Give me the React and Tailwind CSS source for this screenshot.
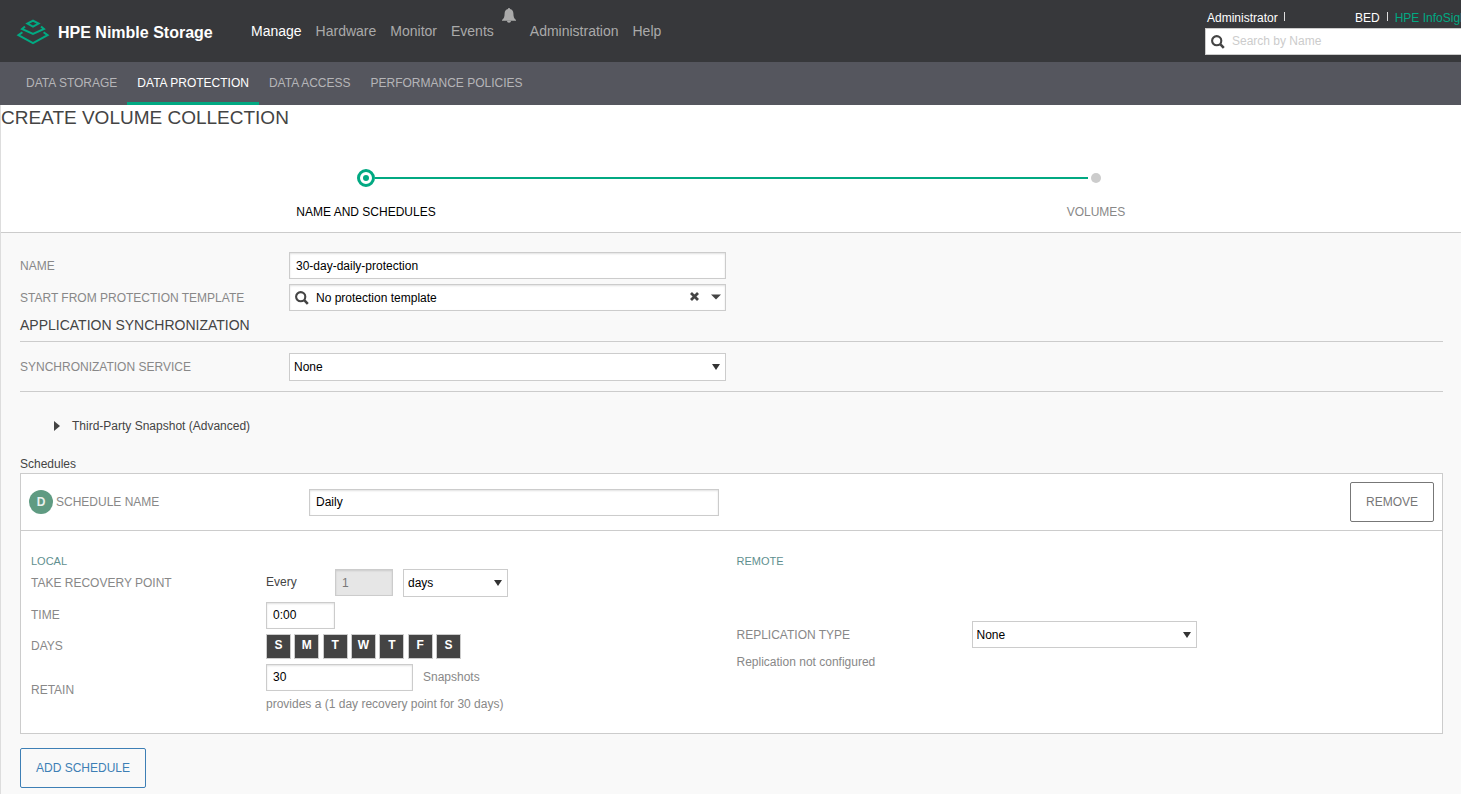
import React, { useState } from "react";

const NAV = ["Manage", "Hardware", "Monitor", "Events"];
const NAV_RIGHT = ["Administration", "Help"];
const TABS = ["DATA STORAGE", "DATA PROTECTION", "DATA ACCESS", "PERFORMANCE POLICIES"];
const DAYS = [
  ["Sunday", "S"],
  ["Monday", "M"],
  ["Tuesday", "T"],
  ["Wednesday", "W"],
  ["Thursday", "T"],
  ["Friday", "F"],
  ["Saturday", "S"],
];

function Logo() {
  return (
    <svg width="34" height="27" viewBox="0 0 34 27" fill="none" stroke="#01a982" strokeWidth="2">
      <path d="M17 2.6 L22.6 5.6 L17 8.6 L11.4 5.6 Z" />
      <path d="M9 8.4 L6 11 L17 16 L28 11 L25 8.4" />
      <path d="M6.4 14.2 L2.4 17.2 L17 25.2 L31.6 17.2 L27.6 14.2" />
    </svg>
  );
}

function BellIcon() {
  return (
    <svg width="14" height="15" viewBox="0 0 14 15" fill="currentColor">
      <path d="M7 0 C7.7 0 8 .5 8 1 C10.2 1.4 11.3 3.2 11.4 5.4 C11.5 8.6 12 10.4 14 12 V12.8 H0 V12 C2 10.4 2.5 8.6 2.6 5.4 C2.7 3.2 3.8 1.4 6 1 C6 .5 6.3 0 7 0 Z" />
      <path d="M5 12.8 H9 C9 14 8.2 14.8 7 14.8 C5.8 14.8 5 14 5 12.8 Z" />
    </svg>
  );
}

function SearchIcon({ className }) {
  return (
    <svg width="14" height="14" viewBox="0 0 14 14" fill="none" stroke="#444" className={className}>
      <circle cx="5.7" cy="5.7" r="4.6" strokeWidth="2.1" />
      <path d="M9.2 9.2 L12.8 12.8" strokeWidth="2.6" />
    </svg>
  );
}

function TextInput({ className = "", ...props }) {
  return (
    <input
      type="text"
      className={`h-[27px] px-[6px] bg-white border border-[#ccc] shadow-[inset_0_1px_2px_rgba(0,0,0,0.12)] text-black disabled:bg-[#e6e6e6] disabled:text-[#777] ${className}`}
      {...props}
    />
  );
}

function Select({ id, options, label, className = "" }) {
  return (
    <div className={`relative ${className}`}>
      <select
        id={id}
        aria-label={label}
        className="w-full h-full pl-1 pr-6 appearance-none bg-white border border-[#ccc] text-black"
      >
        {options.map((o) => (
          <option key={o}>{o}</option>
        ))}
      </select>
      <svg
        width="8"
        height="6"
        viewBox="0 0 8 6"
        className="absolute right-[6px] top-1/2 -translate-y-1/2 pointer-events-none"
      >
        <path d="M0 0 H8 L4 6 Z" fill="#333" />
      </svg>
    </div>
  );
}

function Header() {
  return (
    <header className="flex h-[62px] bg-[#37383b] overflow-hidden">
      <div className="flex items-center w-[251px] shrink-0 pl-4 gap-2">
        <Logo />
        <span className="pt-[3px] text-base font-bold text-white whitespace-nowrap">HPE Nimble Storage</span>
      </div>
      <nav className="flex flex-1 items-center gap-[14px] text-sm text-[#aaa]">
        {NAV.map((item) => (
          <a key={item} href="#" className={item === "Manage" ? "text-white" : ""}>
            {item}
          </a>
        ))}
        <button type="button" aria-label="Alerts" className="self-start mt-2 -ml-[6px]">
          <BellIcon />
        </button>
        {NAV_RIGHT.map((item) => (
          <a key={item} href="#">
            {item}
          </a>
        ))}
      </nav>
      <div className="w-64 shrink-0 pt-[10px] overflow-hidden">
        <div className="flex items-center h-[15px] pl-[2px] text-white whitespace-nowrap">
          <a href="#" className="w-[77px] shrink-0">Administrator</a>
          <span className="w-px h-[9px] mb-[2px] shrink-0 bg-[#ddd]" />
          <a href="#" className="ml-[70px] mr-[7px]">BED</a>
          <span className="w-px h-[9px] mb-[2px] shrink-0 bg-[#ddd]" />
          <a href="#" className="ml-[7px] text-[#01a982]">HPE InfoSight</a>
        </div>
        <div className="relative mt-[3px] w-[280px]">
          <input
            type="search"
            aria-label="Search by Name"
            placeholder="Search by Name"
            className="w-full h-[27px] pl-[26px] pb-[2px] bg-white border border-[#ccc] text-black placeholder:text-[#ccc]"
          />
          <SearchIcon className="absolute left-[6px] top-[7px]" />
        </div>
      </div>
    </header>
  );
}

function SubNav() {
  return (
    <nav className="flex h-[43px] pl-4 bg-[#55565e] text-[#b5b5b8]">
      {TABS.map((tab) => (
        <a
          key={tab}
          href="#"
          className={`flex items-center px-[10px] pt-[2px] border-b-3 ${
            tab === "DATA PROTECTION" ? "border-[#01a982] text-white" : "border-transparent"
          }`}
        >
          {tab}
        </a>
      ))}
    </nav>
  );
}

function Stepper() {
  return (
    <ol className="flex pt-[39px] pb-3">
      <li className="flex-1">
        <div className="flex items-center h-[18px]">
          <span className="flex-1" />
          <span className="flex items-center justify-center size-[18px] rounded-full border-3 border-[#01a982]">
            <span className="size-[6px] rounded-full bg-[#01a982]" />
          </span>
          <span className="flex-1 h-[2px] bg-[#01a982]" />
        </div>
        <p className="mt-[17px] text-center leading-4 text-black">NAME AND SCHEDULES</p>
      </li>
      <li className="flex-1">
        <div className="flex items-center h-[18px]">
          <span className="flex-1 h-[2px] mr-[3px] bg-[#01a982]" />
          <span className="size-[10px] rounded-full bg-[#ccc]" />
          <span className="flex-1 ml-[3px]" />
        </div>
        <p className="mt-[17px] text-center leading-4 text-[#888]">VOLUMES</p>
      </li>
    </ol>
  );
}

function Field({ label, htmlFor, children }) {
  return (
    <div className="flex items-center">
      <label htmlFor={htmlFor} className="w-[269px] shrink-0">{label}</label>
      {children}
    </div>
  );
}

function ScheduleCard() {
  const [days, setDays] = useState(DAYS.map(() => true));
  const toggle = (i) => setDays(days.map((on, j) => (i === j ? !on : on)));

  return (
    <section className="bg-white border border-[#ccc]">
      <div className="flex items-center h-[57px] px-2 border-b border-[#ccc]">
        <span className="flex items-center justify-center size-6 rounded-full bg-[#5f9b82] font-bold text-[#e8f1ed]">
          D
        </span>
        <label htmlFor="schedule-name" className="w-64 pl-[3px]">SCHEDULE NAME</label>
        <TextInput id="schedule-name" defaultValue="Daily" className="w-[410px]" />
        <button
          type="button"
          className="ml-auto h-10 px-[15px] border border-[#777] rounded-xs text-[#777]"
        >
          REMOVE
        </button>
      </div>

      <div className="grid grid-cols-2 gap-[10px] px-[10px] pt-[23px] pb-[21px]">
        <div>
          <h3 className="text-[11px] leading-[15px] text-[#5f8f8f]">LOCAL</h3>
          <div className="flex flex-col gap-[5px]">
            <div className="flex items-center">
              <label htmlFor="every" className="w-[235px]">TAKE RECOVERY POINT</label>
              <div className="flex items-start">
                <span className="w-[69px] leading-[26px] text-[#444]">Every</span>
                <TextInput id="every" defaultValue="1" disabled className="w-[58px]" />
                <Select label="Unit" options={["days", "hours", "weeks"]} className="ml-[10px] w-[105px] h-7" />
              </div>
            </div>
            <div className="flex items-center">
              <label htmlFor="time" className="w-[235px] pb-[2px]">TIME</label>
              <TextInput id="time" defaultValue="0:00" className="w-[69px] pb-[2px]" />
            </div>
            <div className="flex items-center h-[25px]">
              <span className="w-[235px] pb-[2px]">DAYS</span>
              <div>
                {DAYS.map(([name, letter], i) => (
                  <React.Fragment key={name}>
                    <button
                      type="button"
                      aria-label={name}
                      aria-pressed={days[i]}
                      onClick={() => toggle(i)}
                      className={`inline-block size-[25px] pb-1 border border-[#ccc] font-bold ${
                        days[i] ? "bg-[#444] text-white" : "bg-white text-[#444]"
                      }`}
                    >
                      {letter}
                    </button>{" "}
                  </React.Fragment>
                ))}
              </div>
            </div>
            <div className="flex items-center">
              <label htmlFor="retain" className="w-[235px] pt-1">RETAIN</label>
              <div>
                <div className="flex">
                  <TextInput id="retain" defaultValue="30" className="w-[147px] pb-[2px]" />
                  <span className="ml-[10px] leading-[26px]">Snapshots</span>
                </div>
                <p className="mt-[5px] leading-4">provides a (1 day recovery point for 30 days)</p>
              </div>
            </div>
          </div>
        </div>

        <div>
          <h3 className="text-[11px] leading-[15px] text-[#5f8f8f]">REMOTE</h3>
          <div className="flex items-center mt-[52px]">
            <label htmlFor="replication" className="w-[235px]">REPLICATION TYPE</label>
            <Select id="replication" options={["None", "Periodic Snapshot"]} className="w-[225px] h-[27px]" />
          </div>
          <p className="mt-[6px] leading-4">Replication not configured</p>
        </div>
      </div>
    </section>
  );
}

export default function App() {
  return (
    <div className="flex flex-col min-h-screen overflow-x-hidden bg-[#f9f9f9] text-xs text-[#888] font-['Liberation_Sans',Arial,sans-serif]">
      <Header />
      <SubNav />
      <main className="flex-1 border-l border-[#ddd]">
        <div className="bg-white border-b border-[#ccc]">
          <h1 className="pt-px text-[19px] leading-6 text-[#444]">CREATE VOLUME COLLECTION</h1>
          <Stepper />
        </div>

        <form className="pl-[19px] pr-[18px] pt-[19px] pb-[6px]" onSubmit={(e) => e.preventDefault()}>
          <div className="flex flex-col gap-[5px]">
            <Field label="NAME" htmlFor="name">
              <TextInput id="name" defaultValue="30-day-daily-protection" className="w-[437px]" />
            </Field>
            <Field label="START FROM PROTECTION TEMPLATE" htmlFor="template">
              <div className="relative w-[437px]">
                <TextInput id="template" defaultValue="No protection template" className="w-full pl-[26px]" />
                <SearchIcon className="absolute left-[6px] top-[7px]" />
                <div className="absolute right-[5px] top-0 flex items-center gap-3 h-[25px]">
                  <button type="button" aria-label="Clear template">
                    <svg width="9" height="9" viewBox="0 0 9 9" stroke="#444" strokeWidth="2.8">
                      <path d="M1 1 L8 8 M8 1 L1 8" />
                    </svg>
                  </button>
                  <button type="button" aria-label="Show templates">
                    <svg width="10" height="6" viewBox="0 0 10 6">
                      <path d="M0 0.5 H10 L5 5.5 Z" fill="#444" />
                    </svg>
                  </button>
                </div>
              </div>
            </Field>
          </div>

          <h2 className="h-[31px] pt-1 text-sm leading-5 text-[#444] border-b border-[#ccc]">
            APPLICATION SYNCHRONIZATION
          </h2>
          <div className="pt-[11px] pb-[10px] border-b border-[#ccc]">
            <Field label="SYNCHRONIZATION SERVICE" htmlFor="sync">
              <Select id="sync" options={["None", "Microsoft VSS", "VMware vCenter"]} className="w-[437px] h-7" />
            </Field>
          </div>

          <button type="button" className="flex items-center gap-3 mt-[26px] ml-[34px] h-4 text-[#444]">
            <svg width="6" height="10" viewBox="0 0 6 10">
              <path d="M0 0 L6 5 L0 10 Z" fill="#444" />
            </svg>
            Third-Party Snapshot (Advanced)
          </button>

          <h2 className="mt-[22px] pb-[1px] leading-4 text-[#444]">Schedules</h2>
          <ScheduleCard />

          <button
            type="button"
            className="mt-[14px] h-10 px-[15px] border border-[#3d7fb5] rounded-xs text-[#3d7fb5]"
          >
            ADD SCHEDULE
          </button>
        </form>
      </main>
    </div>
  );
}
